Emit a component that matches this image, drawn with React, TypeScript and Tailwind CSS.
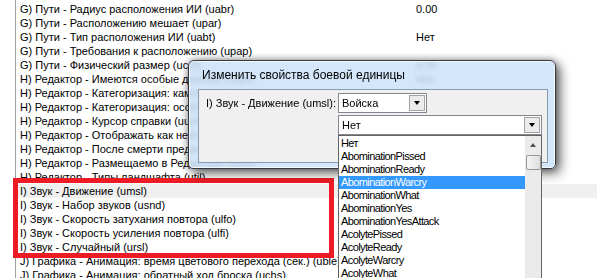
const ROWS: [string, string][] = [
  ['G) Пути - Радиус расположения ИИ (uabr)', '0.00'],
  ['G) Пути - Расположению мешает (upar)', ''],
  ['G) Пути - Тип расположения ИИ (uabt)', 'Нет'],
  ['G) Пути - Требования к расположению (upap)', ''],
  ['G) Пути - Физический размер (ucol)', '0.00'],
  ['H) Редактор - Имеются особые данные (uspe)', 'Нет'],
  ['H) Редактор - Категоризация: кампания (ucam)', ''],
  ['H) Редактор - Категоризация: особые (uspe)', ''],
  ['H) Редактор - Курсор справки (uuch)', ''],
  ['H) Редактор - Отображать как нейтральный враждебный (uhos)', ''],
  ['H) Редактор - После смерти предмет (udro)', ''],
  ['H) Редактор - Размещаемо в Редакторе (uine)', ''],
  ['H) Редактор - Типы ландшафта (util)', ''],
  ['I) Звук - Движение (umsl)', ''],
  ['I) Звук - Набор звуков (usnd)', ''],
  ['I) Звук - Скорость затухания повтора (ulfo)', ''],
  ['I) Звук - Скорость усиления повтора (ulfi)', ''],
  ['I) Звук - Случайный (ursl)', ''],
  ['J) Графика - Анимация: время цветового перехода (сек.) (uble)', ''],
  ['J) Графика - Анимация: обратный ход броска (uchs)', ''],
];

const SOUNDS = [
  'Нет',
  'AbominationPissed',
  'AbominationReady',
  'AbominationWarcry',
  'AbominationWhat',
  'AbominationYes',
  'AbominationYesAttack',
  'AcolytePissed',
  'AcolyteReady',
  'AcolyteWarcry',
  'AcolyteWhat',
  'AcolyteYes',
];

const SELECTED_ROW = 13;
const SELECTED_SOUND = 3;

// --- combo box (classic look) ---
function Combo({ value, width }: { value: string; width: string }) {
  return (
    <div className={`relative h-[20px] ${width} border border-[#828790] bg-white flex items-center pl-[3px]`}>
      <span>{value}</span>
      <div className="absolute right-[1px] top-[1px] bottom-[1px] w-[16px] border border-[#a3a3a3] bg-[#ececec] flex items-center justify-center">
        <div className="w-0 h-0 border-x-[3px] border-x-transparent border-t-[4px] border-t-black" />
      </div>
    </div>
  );
}

export default function App() {
  return (
    <div className="relative w-[597px] h-[278px] overflow-hidden bg-white text-black text-[11px] font-['Liberation_Sans',Arial,sans-serif]">
      {/* --- property list --- */}
      <div className="ml-[15px] h-full border-l border-[#a0a0a0] pt-[2px]">
        {ROWS.map(([name, value], i) => (
          <div
            key={i}
            className={`flex h-[14px] items-center whitespace-nowrap ${i === SELECTED_ROW ? 'bg-[#f0f0f0]' : ''}`}
          >
            <span className="w-[400px] pl-[4px] overflow-hidden">{name}</span>
            <span>{value}</span>
          </div>
        ))}
      </div>

      {/* --- annotation box --- */}
      <div className="absolute left-[13px] top-[178px] w-[321px] h-[80px] border-[5px] border-[#ed1c24]" />

      {/* --- dialog --- */}
      <div className="absolute left-[188px] top-[60px] w-[368px] h-[109px] flex flex-col rounded-t-[6px] rounded-b-[5px] border border-[#333a44] bg-[#cde2f8]/85 backdrop-blur-[2px] shadow-[inset_0_0_0_1px_rgba(255,255,255,0.75),4px_4px_12px_rgba(0,0,0,0.6),0_0_7px_rgba(0,0,0,0.35)]">
        <div className="h-[28px] pl-[13px] flex items-center text-[12px]">
          Изменить свойства боевой единицы
        </div>
        <div className="flex-1 ml-[9px] mr-[7px] mb-[5px] border border-[#8a9bb1] bg-[#f0f0f0] pt-[3px] pl-[7px]">
          <div className="flex items-center">
            <span className="w-[132px]">I) Звук - Движение (umsl):</span>
            <Combo value="Войска" width="w-[89px]" />
          </div>
          <div className="ml-[132px] mt-[2px]">
            <Combo value="Нет" width="w-[204px]" />
          </div>
        </div>
      </div>

      {/* --- dropdown list --- */}
      <div className="absolute left-[338px] top-[135px] w-[204px] h-[150px] border border-[#646464] bg-white flex tracking-[-0.6px]">
        <div className="w-[186px] pt-[1px]">
          {SOUNDS.map((s, i) => (
            <div
              key={s}
              className={`h-[13px] leading-[13px] pl-[2px] whitespace-nowrap ${i === SELECTED_SOUND ? 'bg-[#3399ff] text-white' : ''}`}
            >
              {s}
            </div>
          ))}
        </div>
        <div className="w-[16px] bg-[#ebebeb] flex flex-col items-center">
          <div className="h-[17px] w-full flex items-center justify-center">
            <div className="w-0 h-0 border-x-[3.5px] border-x-transparent border-b-[4px] border-b-[#505050]" />
          </div>
          <div className="mt-[2px] w-[15px] h-[15px] rounded-[2px] border border-[#979797] bg-gradient-to-r from-[#f5f5f5] to-[#dedede]" />
        </div>
      </div>
    </div>
  );
}
